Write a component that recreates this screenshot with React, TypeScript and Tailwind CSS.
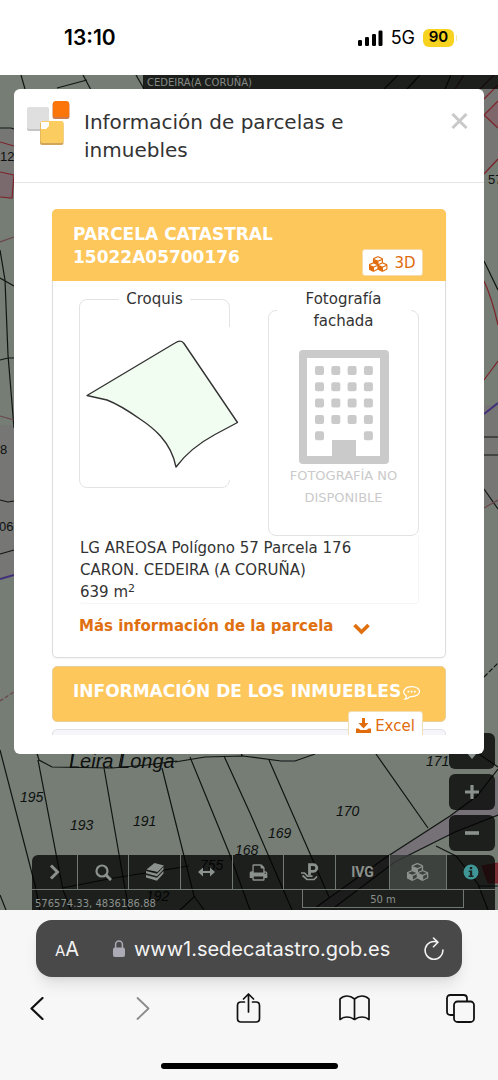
import type { ReactNode } from "react";
import { clsx } from "clsx";

// Thematic colours of the cadastral lines
const LINE = "#111512";
const RED = "#7d2329";
const PURPLE = "#43307a";

type MapLine = {
  d: string;
  color?: string;
  dash?: string;
};

const MAP_LINES: MapLine[] = [
  // Top strip
  { d: "M21 75l4 14M83 75l8 15M57 88l30-8M136 75l8 14M189 75l4 9" },
  { d: "M398 75l-14 14M420 75l-13 14M451 75l-6 14" },
  { d: "M464 75l-9 14M494 75l-14 14", color: "#5a2529" },
  // Left edge
  { d: "M0 128h11l3 1M0 250l5 30 3 75 6 73M0 278l14 8M0 360l8-2h6M0 500l8 2 6-1M0 554l14-4" },
  { d: "M0 142l14 4M0 172l14 3-2 23-12-1", color: RED },
  { d: "M0 242l14-5M0 416l14 4", color: "#6b4548" },
  { d: "M0 579l14-4", color: PURPLE },
  { d: "M0 701l14-9", color: "#6b4548", dash: "4 2" },
  // Right edge
  { d: "M484 261l14 29M484 437h14M484 455h14M484 489l14 20" },
  { d: "M484 677l14-14", dash: "5 2" },
  { d: "M484 99l14-14M498 101l-14 14 14 13M484 174l14-15M484 281q8 17 14 44M484 380l14-19", color: RED },
  { d: "M484 414l14-11", color: PURPLE },
  { d: "M484 508l14-8", color: "#6b4548" },
  // Lower parcels
  { d: "M0 750l35 135 5 25M0 895l6 15M36 750l3 10 13 7 60 1 35-3 30-4M38 760l25 130 8 20M104 768l20 115 5 27" },
  { d: "M162 768l32 128 10 14M190 757l40 98 20 55M224 756l26 57 42 97M269 760l60 137M376 754l52 74" },
  { d: "M73 748l-2 20M123 748l-4 20M175 762l30-5 38-1 38 5h14l20-7M241 752l1 4" },
  { d: "M62 888l52-10 75-12M180 910l15-14M315 908l70-50 65-42 27-20 21-27M335 907l60-45 60-30 43-17" },
  { d: "M436 846l20 10 22 28 10 26M478 886h20M479 754l19 13" },
];

const MAP_LABELS = [
  { x: 20, y: 802, text: "195" },
  { x: 70, y: 830, text: "193" },
  { x: 133, y: 826, text: "191" },
  { x: 235, y: 855, text: "168" },
  { x: 268, y: 838, text: "169" },
  { x: 336, y: 816, text: "170" },
  { x: 426, y: 766, text: "171" },
  { x: 200, y: 870, text: "755" },
  { x: 146, y: 901, text: "192" },
];

function CadastralMap() {
  return (
    <svg
      className="absolute inset-0 h-full w-full"
      viewBox="0 75 498 835"
      preserveAspectRatio="xMidYMin slice"
      fontFamily="Liberation Sans, sans-serif"
      aria-hidden="true"
    >
      <rect y="75" width="498" height="835" fill="#757d75" />
      <path d="M0 129h14v44H0zM0 425h14v150l-14 4z" fill="#767775" />
      <path d="M0 173l13 2v22H0z" fill="#7b6a6d" />
      <path d="M484 89h14v70l-14 15zM484 405h14v100h-14z" fill="#767675" />
      <path d="M484 115l14-14v27z" fill="#7f666a" />
      <path d="M315 908l70-50 65-42 48-40v39l-43 17-60 30-60 45z" fill="#767176" />
      <path d="M482 866l16-3v20h-10z" fill="#7a3036" stroke={RED} />
      {MAP_LINES.map((line) => (
        <path
          key={line.d}
          d={line.d}
          fill="none"
          stroke={line.color ?? LINE}
          strokeWidth={line.color === PURPLE ? 2 : 1.2}
          strokeDasharray={line.dash}
        />
      ))}
      <g fontSize="14" fontStyle="italic" fill="#0d100e">
        {MAP_LABELS.map((label) => (
          <text key={label.text} x={label.x} y={label.y}>
            {label.text}
          </text>
        ))}
        <text x="69" y="768" fontSize="20">
          Leira Longa
        </text>
      </g>
      <g fontSize="13" fill="#0d100e">
        <text x="0" y="161">12</text>
        <text x="488" y="184">57</text>
        <text x="0" y="454">8</text>
        <text x="-1" y="531">06</text>
      </g>
    </svg>
  );
}

function CubesIcon({ className }: { className?: string }) {
  return (
    <svg className={className} viewBox="0 0 2176 1792" fill="currentColor" aria-hidden="true">
      <path d="M576 1632l384-192v-314l-384 164v342zm-64-454l404-173-404-173-404 173zm1088 454l384-192v-314l-384 164v342zm-64-454l404-173-404-173-404 173zm-448-293l384-165v-266l-384 164v267zm-64-379l441-189-441-189-441 189zm1088 518v416q0 36-19 67t-52 47l-448 224q-25 14-57 14t-57-14l-448-224q-4-2-7-4-2 2-7 4l-448 224q-25 14-57 14t-57-14l-448-224q-33-16-52-47t-19-67v-416q0-38 21.5-70t56.5-48l434-186v-400q0-38 21.5-70t56.5-48l448-192q23-10 50-10t50 10l448 192q35 16 56.5 48t21.5 70v400l434 186q36 16 57 48t21 70z" />
    </svg>
  );
}

function StatusBar() {
  return (
    <header className="flex h-[75px] shrink-0 items-center justify-between bg-white pr-[41px] pl-16 font-['Inter',sans-serif] text-black">
      <span className="text-[21px] font-semibold">13:10</span>
      <div className="flex items-center gap-2">
        <svg className="h-4 w-[26px]" viewBox="0 0 26 16" aria-label="Cobertura">
          <rect x="1" y="10" width="4" height="6" rx="1.3" />
          <rect x="8" y="7" width="4" height="9" rx="1.3" />
          <rect x="15" y="4" width="4" height="12" rx="1.3" />
          <rect x="21.500" y="0.500" width="4" height="15.500" rx="1.3" />
        </svg>
        <span className="text-lg">5G</span>
        <span className="flex items-center gap-0.5">
          <span className="flex h-[18px] w-[31px] items-center justify-center rounded-md bg-[#f7d21e] text-[15px] font-semibold">
            90
          </span>
          <span className="h-1.5 w-px rounded-full bg-[#f3e6ae]" />
        </span>
      </div>
    </header>
  );
}

function Logo() {
  return (
    <svg className="h-[46px] w-11 shrink-0" viewBox="26 100 44 46" aria-hidden="true">
      <rect x="27" y="108" width="22" height="23" rx="2" fill="#c4c4c4" />
      <rect x="27" y="107" width="22" height="22" rx="2" fill="#dfdfdf" />
      <rect x="52.500" y="102" width="17" height="17" rx="2.500" fill="#cf7a4c" />
      <rect x="53" y="101" width="16" height="16" rx="2.500" fill="#fc750b" />
      <rect x="40" y="122" width="23.500" height="23" rx="2" fill="#cfa65a" />
      <rect x="40.500" y="121" width="23" height="22" rx="2" fill="#fbcd60" />
      <path d="M41 122h8v4l-3 3h-5z" fill="#fff" />
    </svg>
  );
}

function ParcelSketch() {
  return (
    <svg className="relative mt-[17px] ml-0.5 h-[153px] w-[158px] max-w-none bg-white" viewBox="82 327 158 153" role="img" aria-label="Croquis de la parcela">
      <path
        d="M87 395.500L175 343Q181 339 184 343.500L237.500 422.500L215 434.500Q190 448 176 467C171 441 152 427 140 419Q120 405 107 400Z"
        fill="#f2fdf1"
        stroke="#333"
        strokeWidth="1.4"
        strokeLinejoin="round"
      />
    </svg>
  );
}

const WINDOWS = [0, 1, 2, 3, 4].flatMap((row) =>
  [0, 1, 2, 3]
    .filter((col) => row < 4 || col === 0 || col === 3)
    .map((col) => ({ x: 16 + col * 16.300, y: 16 + row * 16.300 }))
);

function BuildingIcon() {
  return (
    <svg className="mx-auto mt-[18px] h-[115px] w-[90px]" viewBox="0 0 90 115" fill="#cacaca" aria-hidden="true">
      <path fillRule="evenodd" d="M4 0h82q4 0 4 4v106q0 4-4 4H4q-4 0-4-4V4q0-4 4-4zM8 8v98h25V90h24v16h24V8z" />
      {WINDOWS.map((w) => (
        <rect key={`${w.x}-${w.y}`} x={w.x} y={w.y} width="9" height="9" rx="2" />
      ))}
    </svg>
  );
}

function ParcelPanel() {
  return (
    <section className="rounded-[5px] border border-[#ddd] bg-white shadow-xs">
      <header className="-mx-px -mt-px flex items-end justify-between rounded-t-[5px] bg-[#fec75b] pt-[14px] pr-[23px] pb-[5px] pl-[21px]">
        <h2 className="mb-[7px] text-[17px] leading-[23px] font-bold text-white">
          PARCELA CATASTRAL
          <br />
          15022A05700176
        </h2>
        <button type="button" className="flex h-[27px] w-[61px] items-center justify-center gap-[6px] rounded-[3px] border border-[#f3dcae] bg-white pt-0.5 text-[15px] text-[#e06c0c]">
          <CubesIcon className="h-4 w-[19px]" />
          3D
        </button>
      </header>

      <div className="px-[26px] pt-[7px]">
        <div className="grid grid-cols-2 items-start gap-[38px] text-[15px] leading-[22px]">
          <fieldset className="h-[200px] min-w-0 rounded-lg border border-[#e3e3e3]">
            <legend className="mx-auto px-[7px]">Croquis</legend>
            <ParcelSketch />
          </fieldset>
          <fieldset className="h-[248px] min-w-0 rounded-lg border border-[#e3e3e3] text-center">
            <legend className="mx-auto w-[134px] px-5 text-center">Fotografía fachada</legend>
            <BuildingIcon />
            <p className="px-4 text-[13px] leading-[22px] text-[#cacaca]">FOTOGRAFÍA NO DISPONIBLE</p>
          </fieldset>
        </div>

        <p className="mt-px rounded-b border-r border-b border-[#f6f6f6] pl-px text-[15px] leading-[22px]">
          LG AREOSA Polígono 57 Parcela 176
          <br />
          CARON. CEDEIRA (A CORUÑA)
          <br />
          639 m<sup className="text-[11px]">2</sup>
        </p>

        <button type="button" className="mt-[11px] mb-5 flex items-center gap-5 text-[15px] leading-[22px] font-bold text-[#e0700f]">
          Más información de la parcela
          <svg className="mt-1.5 h-3 w-[17px]" viewBox="0 0 17 12" fill="none" stroke="currentColor" strokeWidth="3.600" aria-hidden="true">
            <path d="M1.500 2l7 7 7-7" />
          </svg>
        </button>
      </div>
    </section>
  );
}

function PropertiesPanel() {
  return (
    <>
      <h2 className="mt-2 flex h-14 items-start gap-0.5 rounded-[5px] border border-[#e8cf9a] bg-[#fec75b] pt-[13px] pl-5 text-[17px] leading-[23px] font-bold whitespace-nowrap text-white">
        INFORMACIÓN DE LOS INMUEBLES
        <svg className="mt-[6px] h-[14px] w-[17px] shrink-0" viewBox="0 0 17 14" fill="none" stroke="currentColor" strokeWidth="1.200" aria-hidden="true">
          <path d="M3.500 10C-3 5.500 3 .7 8.500.7s8 2.600 8 5-3 5-8 5l-1.500-.1Q5 12.800 2 13.200 3.500 11.500 3.500 10z" />
          <path d="M4.500 5.700h1.800M7.700 5.700h1.800M10.900 5.700h1.800" strokeWidth="1.800" />
        </svg>
      </h2>
      <section className="mt-[7px] h-40 rounded-[5px] border border-[#e0dfe6] bg-[#f6f6fa] pr-[22px]">
        <button type="button" className="relative -mt-[19px] ml-auto flex h-[30px] w-[75px] items-center justify-center gap-1 rounded-[3px] border border-[#f1dcb4] bg-white text-[15px] text-[#e06c0c]">
          <svg className="h-4 w-[15px]" viewBox="0 0 15 16" fill="currentColor" aria-hidden="true">
            <path d="M6 0h3v5h3.500L7.500 10.500 2.500 5H6zM0 10.500h2.500l2 1.500h6l2-1.500H15V15H0z" />
          </svg>
          Excel
        </button>
      </section>
    </>
  );
}

function ParcelDialog() {
  return (
    <div
      role="dialog"
      aria-label="Información de parcelas e inmuebles"
      className="relative z-10 mx-[14px] mt-[14px] rounded-md bg-white pb-[19px] font-['DejaVu_Sans',Verdana,sans-serif] text-[#333]"
    >
      <div className="flex items-start border-b border-[#e5e5e5] pt-[11px] pr-4 pb-[18px] pl-3">
        <Logo />
        <h1 className="mt-2 ml-[14px] flex-1 text-xl leading-7">Información de parcelas e inmuebles</h1>
        <button type="button" aria-label="Cerrar" className="mt-[13px] text-[#c9c9c9]">
          <svg className="h-4 w-[17px]" viewBox="0 0 17 16" fill="none" stroke="currentColor" strokeWidth="3">
            <path d="M1.500 1l14 14M15.500 1l-14 14" />
          </svg>
        </button>
      </div>
      <div className="h-[552px] overflow-hidden px-[38px] pt-[26px]">
        <ParcelPanel />
        <PropertiesPanel />
      </div>
    </div>
  );
}

type Tool = {
  label: string;
  icon: ReactNode;
  active?: boolean;
};

const TOOLS: Tool[] = [
  {
    label: "Desplegar",
    icon: (
      <svg className="h-4 w-3" viewBox="0 0 12 16" fill="none" stroke="currentColor" strokeWidth="3">
        <path d="M2 1.500L8.500 8 2 14.500" />
      </svg>
    ),
  },
  {
    label: "Buscar",
    icon: (
      <svg className="h-[17px] w-[17px]" viewBox="0 0 17 17" fill="none" stroke="currentColor" strokeWidth="2.200">
        <circle cx="7" cy="7" r="5.500" />
        <path d="M11 11l5 5" strokeWidth="3" />
      </svg>
    ),
  },
  {
    label: "Capas",
    icon: (
      <svg className="h-[18px] w-5" viewBox="0 0 20 18" fill="currentColor">
        <path d="M9.500 0L19 2.500 12.500 9 1.500 6.500z" />
        <path d="M1 8l11 2.800L18.500 4v2.500L12 13.200 1 10.300zM1 12l11 2.800L18.500 8v2.500L12 17.700 1 14.500z" />
      </svg>
    ),
  },
  {
    label: "Medir",
    icon: (
      <svg className="h-2.5 w-[17px]" viewBox="0 0 17 10" fill="currentColor">
        <path d="M0 5l5-4.500V4h7V.500L17 5l-5 4.500V6H5v3.500z" />
      </svg>
    ),
  },
  {
    label: "Imprimir",
    icon: (
      <svg className="h-[19px] w-[19px]" viewBox="64 0 1664 1792" fill="currentColor">
        <path d="M448 1536h896v-256h-896v256zm0-640h896v-384h-160q-40 0-68-28t-28-68v-160h-640v640zm1152 64q0-26-19-45t-45-19-45 19-19 45 19 45 45 19 45-19 19-45zm128 0v416q0 13-9.500 22.500t-22.500 9.500h-224v160q0 40-28 68t-68 28h-960q-40 0-68-28t-28-68v-160h-224q-13 0-22.500-9.500t-9.500-22.500v-416q0-79 56.500-135.500t135.500-56.500h64v-544q0-40 28-68t68-28h672q40 0 88 20t76 48l152 152q28 28 48 76t20 88v256h64q79 0 135.500 56.500t56.500 135.500z" />
      </svg>
    ),
  },
  {
    label: "Ponencia de valores",
    icon: (
      <svg className="h-[18px] w-[18px]" viewBox="0 0 18 18" fill="none" stroke="currentColor">
        <path d="M8.500 12V1.700h4a3.300 3.300 0 010 6.600h-4" strokeWidth="2.800" />
        <path d="M0 10h3.500l3 3.200h5M1.500 12.500l4.500 4h7l3-3" strokeWidth="1.700" />
      </svg>
    ),
  },
  { label: "IVG", icon: <span className="font-['Roboto',sans-serif] text-sm font-bold">IVG</span> },
  { label: "Vista 3D", icon: <CubesIcon className="h-[18px] w-[22px]" />, active: true },
  {
    label: "Información",
    icon: (
      <svg className="h-4 w-4 text-[#3f9697]" viewBox="0 0 16 16">
        <circle cx="8" cy="8" r="7.500" fill="currentColor" />
        <path d="M6.800 3h2.400v2.200H6.800zM5.800 6.500h3.400v5h1.300V13H5.600v-1.500h1.300V8H5.800z" fill="#1d2320" />
      </svg>
    ),
  },
];

function MapControls() {
  return (
    <div className="relative text-[#8b918c]">
      <div className="-mt-[21px] mr-[3px] ml-auto flex w-[46px] flex-col gap-[5px]">
        <button type="button" aria-label="Mover al sur" className="flex h-9 items-end justify-center rounded-md bg-black/75 pb-2.5">
          <svg className="h-3 w-3" viewBox="0 0 12 12" fill="currentColor">
            <path d="M4 0h4v6h3l-5 6-5-6h3z" />
          </svg>
        </button>
        <button type="button" aria-label="Acercar" className="flex h-9 items-center justify-center rounded-md bg-black/75">
          <svg className="h-3.5 w-3.5" viewBox="0 0 14 14" stroke="currentColor" strokeWidth="3.200">
            <path d="M7 0v14M0 7h14" />
          </svg>
        </button>
        <button type="button" aria-label="Alejar" className="flex h-9 items-center justify-center rounded-md bg-black/75">
          <svg className="h-3.5 w-3.5" viewBox="0 0 14 14" stroke="currentColor" strokeWidth="3.600">
            <path d="M0 7h14" />
          </svg>
        </button>
      </div>

      <nav className="mt-1 mr-[3px] ml-8 grid h-[35px] grid-cols-[46fr_51fr_52fr_52fr_51fr_52fr_54fr_57fr_48fr] overflow-hidden rounded-t-md border-b border-[#717872] bg-black/75">
        {TOOLS.map((tool) => (
          <button
            key={tool.label}
            type="button"
            aria-label={tool.label}
            className={clsx(
              "flex items-center justify-center border-r border-[#717872] last:border-r-0",
              tool.active && "bg-[#717872]/40"
            )}
          >
            {tool.icon}
          </button>
        ))}
      </nav>

      <div className="mr-[3px] ml-8 flex h-5 items-stretch justify-between bg-black/75 pr-[31px] pl-[3px] font-['DejaVu_Sans',Verdana,sans-serif] text-[10px] leading-[14px]">
        <span className="pt-[7px]">576574.33, 4836186.88</span>
        <span className="mb-0.5 w-[162px] border border-t-0 border-[#717872] pt-[3px] text-center">50 m</span>
      </div>
    </div>
  );
}

function BrowserBar() {
  return (
    <footer className="flex flex-1 flex-col bg-[#f7f7f7] px-9 pt-[10px] font-['Inter',sans-serif]">
      <div className="flex h-[57px] items-center justify-between rounded-2xl bg-[#494949] pr-[18px] pl-[19px] text-[#f3f3f3] shadow-lg shadow-black/10">
        <button type="button" aria-label="Ajustes de página" className="leading-none">
          <span className="text-[15px]">A</span>
          <span className="text-xl">A</span>
        </button>
        <a href="#direccion" className="flex items-center gap-[9px] text-xl">
          <svg className="h-[17px] w-3 text-[#abaab5]" viewBox="0 0 12 17" aria-hidden="true">
            <path d="M2.600 8V4.500a3.400 3.400 0 016.800 0V8" fill="none" stroke="currentColor" strokeWidth="1.500" />
            <rect y="7.500" width="12" height="9.500" rx="2" fill="currentColor" />
          </svg>
          www1.sedecatastro.gob.es
        </a>
        <button type="button" aria-label="Recargar">
          <svg className="h-[23px] w-5" viewBox="0 0 20 23" fill="none" stroke="currentColor" strokeWidth="1.600" strokeLinecap="round" strokeLinejoin="round">
            <path d="M13.500 5.200A8.900 8.900 0 1018.900 13M9.500 1l4.500 4.300-4.500 4.400" />
          </svg>
        </button>
      </div>

      <nav className="-mr-[14px] -ml-[15px] flex h-[62px] items-center justify-between text-[#111]">
        <button type="button" aria-label="Atrás" className="flex w-8 justify-center">
          <svg className="h-[23px] w-[14px]" viewBox="0 0 14 23" fill="none" stroke="currentColor" strokeWidth="2.200" strokeLinecap="round" strokeLinejoin="round">
            <path d="M12.500 1L1.500 11.500l11 10.500" />
          </svg>
        </button>
        <button type="button" aria-label="Adelante" className="flex w-8 justify-center text-[#8a8a8a]">
          <svg className="h-[23px] w-[14px]" viewBox="0 0 14 23" fill="none" stroke="currentColor" strokeWidth="1.800" strokeLinecap="round" strokeLinejoin="round">
            <path d="M1.500 1l11 10.500L1.500 22" />
          </svg>
        </button>
        <button type="button" aria-label="Compartir" className="flex w-8 justify-center">
          <svg className="h-[30px] w-[25px]" viewBox="0 0 25 30" fill="none" stroke="currentColor" strokeWidth="1.700" strokeLinecap="round" strokeLinejoin="round">
            <path d="M8.500 9H5Q1.500 9 1.500 12.500v13Q1.500 29 5 29h15q3.500 0 3.500-3.500v-13Q23.500 9 20 9h-3.500M12.500 19V1M7.500 6l5-5 5 5" />
          </svg>
        </button>
        <button type="button" aria-label="Marcadores" className="flex w-8 justify-center">
          <svg className="h-[26px] w-[31px]" viewBox="0 0 31 26" fill="none" stroke="currentColor" strokeWidth="1.700" strokeLinejoin="round">
            <path d="M15.500 4Q12 1 8 1T1 4v20.500Q4 22 8 22t7.500 2.500Q19 22 23 22t7 2.500V4q-3-3-7-3t-7.500 3zM15.500 4v20.500" />
          </svg>
        </button>
        <button type="button" aria-label="Pestañas" className="flex w-8 justify-center">
          <svg className="h-[29px] w-[29px]" viewBox="0 0 29 29" fill="none" stroke="currentColor" strokeWidth="1.800" strokeLinejoin="round">
            <rect x="8" y="7.500" width="20" height="20.500" rx="3.500" />
            <path d="M8 21H4.500Q1 21 1 17.500v-13Q1 1 4.500 1h13Q21 1 21 4.500v3" />
          </svg>
        </button>
      </nav>

      <div className="mx-auto mt-6 h-[6px] w-[177px] rounded-full bg-black" />
    </footer>
  );
}

export default function App() {
  return (
    <div className="flex min-h-screen flex-col bg-[#f7f7f7]">
      <StatusBar />
      <main className="relative flow-root overflow-hidden">
        <CadastralMap />
        <div className="absolute top-0 right-0 left-[143px] h-[14px] bg-black/75 pl-1 font-['DejaVu_Sans',Verdana,sans-serif] text-[10px] leading-[16px] text-[#858a86]">
          CEDEIRA(A CORUÑA)
        </div>
        <ParcelDialog />
        <MapControls />
      </main>
      <BrowserBar />
    </div>
  );
}
